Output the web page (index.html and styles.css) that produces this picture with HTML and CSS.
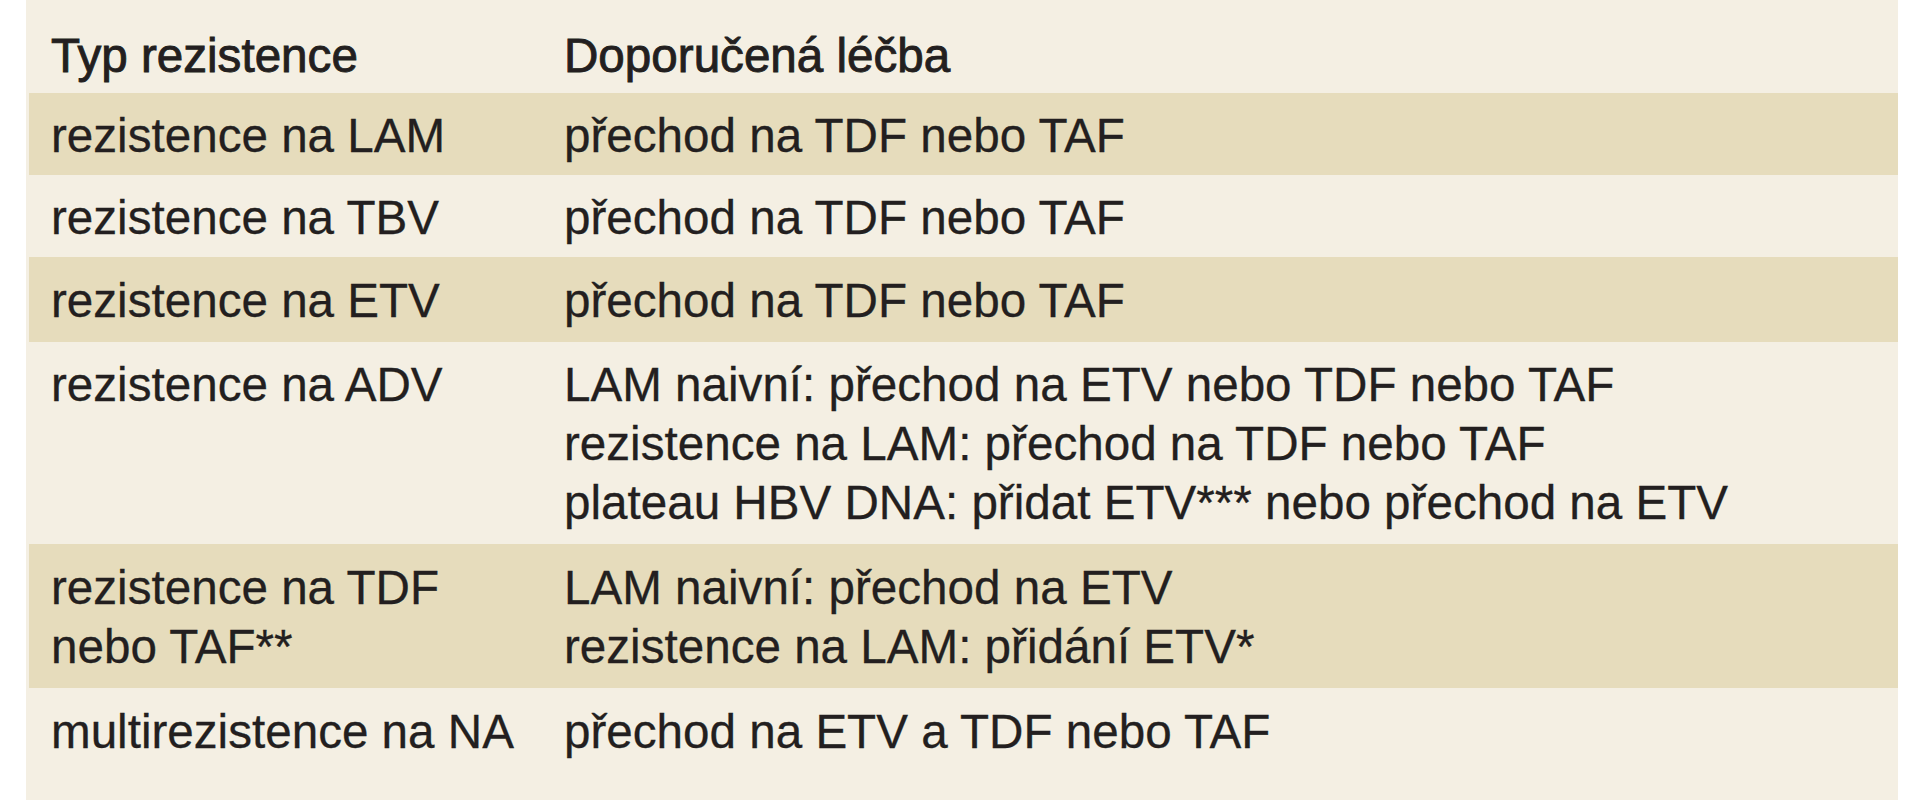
FILE: index.html
```html
<!DOCTYPE html>
<html lang="cs">
<head>
<meta charset="utf-8">
<title>Rezistence</title>
<link rel="stylesheet" href="styles.css">
</head>
<body>
<div class="panel">
  <div class="row head">
    <div class="cell">Typ rezistence</div>
    <div class="cell">Doporučená léčba</div>
  </div>
  <div class="row alt">
    <div class="cell">rezistence na LAM</div>
    <div class="cell">přechod na TDF nebo TAF</div>
  </div>
  <div class="row">
    <div class="cell">rezistence na TBV</div>
    <div class="cell">přechod na TDF nebo TAF</div>
  </div>
  <div class="row alt r3">
    <div class="cell">rezistence na ETV</div>
    <div class="cell">přechod na TDF nebo TAF</div>
  </div>
  <div class="row r4">
    <div class="cell">rezistence na ADV</div>
    <div class="cell">
      <span class="line">LAM naivní: přechod na ETV nebo TDF nebo TAF</span>
      <span class="line">rezistence na LAM: přechod na TDF nebo TAF</span>
      <span class="line">plateau HBV DNA: přidat ETV*** nebo přechod na ETV</span>
    </div>
  </div>
  <div class="row alt r5">
    <div class="cell">
      <span class="line">rezistence na TDF</span>
      <span class="line">nebo TAF**</span>
    </div>
    <div class="cell">
      <span class="line">LAM naivní: přechod na ETV</span>
      <span class="line">rezistence na LAM: přidání ETV*</span>
    </div>
  </div>
  <div class="row last">
    <div class="cell">multirezistence na NA</div>
    <div class="cell">přechod na ETV a TDF nebo TAF</div>
  </div>
</div>
</body>
</html>
```

FILE: styles.css
```css
html, body {
  margin: 0;
  padding: 0;
  background: #ffffff;
}

body {
  font-family: "Liberation Sans", Arial, sans-serif;
  font-size: 47.6px;
  line-height: 59px;
  color: #231f20;
  -webkit-text-stroke: 0.3px #231f20;
}

.panel {
  margin-left: 26px;
  width: 1872px;
  height: 800px;
  background: #f4efe3;
  overflow: hidden;
}

.row {
  display: grid;
  grid-template-columns: 513px 1fr;
  padding: 13px 0 10px 25px;
}

.row.head {
  padding-top: 26px;
  padding-bottom: 8px;
  -webkit-text-stroke: 0.9px #231f20;
}

.row.alt {
  background: #e6dcbc;
  margin-left: 3px;
  padding-left: 22px;
}

.row.r3 {
  padding-top: 14px;
  padding-bottom: 12px;
}

.row.r4 {
  padding-bottom: 12px;
}

.row.r5 {
  padding-top: 14px;
  padding-bottom: 12px;
}

.row.last {
  padding-top: 14px;
}

.cell {
  white-space: nowrap;
}

.line {
  display: block;
}
```
